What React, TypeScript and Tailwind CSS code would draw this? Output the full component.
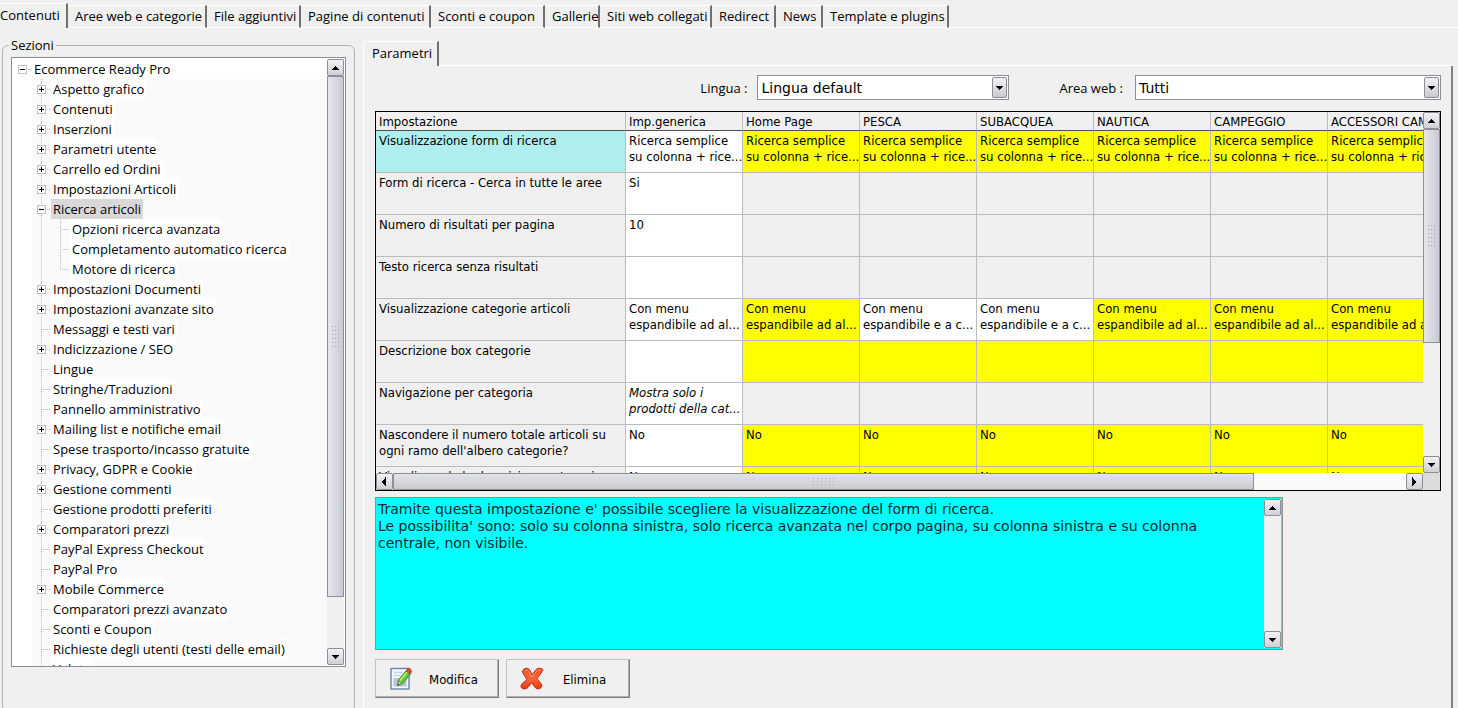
import { useState } from "react";
import clsx from "clsx";

type Guide = "plus" | "minus" | "leaf";

type TreeItem = {
    label: string;
    guide: Guide;
    children?: string[];
};

const TABS = [
    { label: "Contenuti", width: "w-[68px]" },
    { label: "Aree web e categorie", width: "w-[139px]" },
    { label: "File aggiuntivi", width: "w-[94px]" },
    { label: "Pagine di contenuti", width: "w-[130px]" },
    { label: "Sconti e coupon", width: "w-[114px]" },
    { label: "Gallerie", width: "w-[55px]" },
    { label: "Siti web collegati", width: "w-[112px]" },
    { label: "Redirect", width: "w-[64px]" },
    { label: "News", width: "w-[47px]" },
    { label: "Template e plugins", width: "w-[126px]" },
];

const TREE: TreeItem[] = [
    { label: "Aspetto grafico", guide: "plus" },
    { label: "Contenuti", guide: "plus" },
    { label: "Inserzioni", guide: "plus" },
    { label: "Parametri utente", guide: "plus" },
    { label: "Carrello ed Ordini", guide: "plus" },
    { label: "Impostazioni Articoli", guide: "plus" },
    {
        label: "Ricerca articoli",
        guide: "minus",
        children: ["Opzioni ricerca avanzata", "Completamento automatico ricerca", "Motore di ricerca"],
    },
    { label: "Impostazioni Documenti", guide: "plus" },
    { label: "Impostazioni avanzate sito", guide: "plus" },
    { label: "Messaggi e testi vari", guide: "leaf" },
    { label: "Indicizzazione / SEO", guide: "plus" },
    { label: "Lingue", guide: "leaf" },
    { label: "Stringhe/Traduzioni", guide: "leaf" },
    { label: "Pannello amministrativo", guide: "leaf" },
    { label: "Mailing list e notifiche email", guide: "plus" },
    { label: "Spese trasporto/incasso gratuite", guide: "leaf" },
    { label: "Privacy, GDPR e Cookie", guide: "plus" },
    { label: "Gestione commenti", guide: "plus" },
    { label: "Gestione prodotti preferiti", guide: "leaf" },
    { label: "Comparatori prezzi", guide: "plus" },
    { label: "PayPal Express Checkout", guide: "leaf" },
    { label: "PayPal Pro", guide: "leaf" },
    { label: "Mobile Commerce", guide: "plus" },
    { label: "Comparatori prezzi avanzato", guide: "leaf" },
    { label: "Sconti e Coupon", guide: "leaf" },
    { label: "Richieste degli utenti (testi delle email)", guide: "leaf" },
    { label: "Valute", guide: "leaf" },
];

const COLUMNS = ["Imp.generica", "Home Page", "PESCA", "SUBACQUEA", "NAUTICA", "CAMPEGGIO", "ACCESSORI CAMPEGGIO"];

// w = white (own value), y = yellow (inherited), g = grey (not available)
type Cell = { tone: "w" | "y" | "g"; text?: string; italic?: boolean };

const repeat = (cell: Cell, n: number): Cell[] => Array.from({ length: n }, () => cell);
const GREY: Cell = { tone: "g" };

const FORM = "Ricerca semplice\nsu colonna + rice...";
const MENU_AL = "Con menu\nespandibile ad al...";
const MENU_C = "Con menu\nespandibile e a c...";

const ROWS: { name: string; cells: Cell[] }[] = [
    { name: "Visualizzazione form di ricerca", cells: [{ tone: "w", text: FORM }, ...repeat({ tone: "y", text: FORM }, 6)] },
    { name: "Form di ricerca - Cerca in tutte le aree", cells: [{ tone: "w", text: "Si" }, ...repeat(GREY, 6)] },
    { name: "Numero di risultati per pagina", cells: [{ tone: "w", text: "10" }, ...repeat(GREY, 6)] },
    { name: "Testo ricerca senza risultati", cells: [{ tone: "w" }, ...repeat(GREY, 6)] },
    {
        name: "Visualizzazione categorie articoli",
        cells: [
            { tone: "w", text: MENU_AL },
            { tone: "y", text: MENU_AL },
            ...repeat({ tone: "w", text: MENU_C }, 2),
            ...repeat({ tone: "y", text: MENU_AL }, 3),
        ],
    },
    { name: "Descrizione box categorie", cells: [{ tone: "w" }, ...repeat({ tone: "y" }, 6)] },
    {
        name: "Navigazione per categoria",
        cells: [{ tone: "w", text: "Mostra solo i\nprodotti della cat...", italic: true }, ...repeat(GREY, 6)],
    },
    {
        name: "Nascondere il numero totale articoli su\nogni ramo dell'albero categorie?",
        cells: [{ tone: "w", text: "No" }, ...repeat({ tone: "y", text: "No" }, 6)],
    },
    {
        name: "Visualizzando la descrizione categorie",
        cells: [{ tone: "w", text: "No" }, ...repeat({ tone: "y", text: "No" }, 6)],
    },
];

const HELP_TEXT =
    "Tramite questa impostazione e' possibile scegliere la visualizzazione del form di ricerca.\n" +
    "Le possibilita' sono: solo su colonna sinistra, solo ricerca avanzata nel corpo pagina, su colonna sinistra e su colonna centrale, non visibile.";

const ARROWS = {
    up: "M4 0h1v1h1v1h1v1h1v1H1V3h1V2h1V1h1z",
    down: "M1 0h7v1H7v1H6v1H5v1H4V3H3V2H2V1H1z",
    left: "M4 0v9H3V8H2V7H1V6H0V4h1V3h1V2h1V0z",
    right: "M0 0v9h1V8h1V7h1V6h1V4H3V3H2V2H1V0z",
};

const Arrow = ({ dir }: { dir: keyof typeof ARROWS }) => {
    const vertical = dir === "up" || dir === "down";
    return (
        <svg width={vertical ? 9 : 5} height={vertical ? 4 : 9} shapeRendering="crispEdges" aria-hidden="true">
            <path d={ARROWS[dir]} fill="#000" />
        </svg>
    );
};

const ScrollButton = ({ dir, label }: { dir: keyof typeof ARROWS; label: string }) => (
    <button
        type="button"
        aria-label={label}
        className="flex h-[17px] w-[17px] shrink-0 items-center justify-center rounded-xs border border-[#8e8f96] bg-linear-to-b from-[#f2f2f4] to-[#cfd0d6]"
    >
        <Arrow dir={dir} />
    </button>
);

// Dotted grip in the middle of a scrollbar thumb
const Grip = ({ vertical }: { vertical?: boolean }) => {
    const long = [1, 5, 9, 13, 17, 21];
    const short = [1, 4, 7];
    return (
        <svg width={vertical ? 9 : 24} height={vertical ? 24 : 9} shapeRendering="crispEdges" aria-hidden="true">
            {long.map(a =>
                short.map(b => (
                    <rect key={`${a}-${b}`} x={vertical ? b : a} y={vertical ? a : b} width="1" height="1" fill="#a2a4ac" />
                ))
            )}
        </svg>
    );
};

const Expander = ({ guide, root }: { guide: Guide; root?: boolean }) => (
    <svg width="19" height="20" className="shrink-0" shapeRendering="crispEdges" aria-hidden="true">
        {!root && <path d="M9.5 0v20" stroke="#bdbdbd" strokeDasharray="1 1" />}
        <path d="M9 10.5h9" stroke="#bdbdbd" strokeDasharray="1 1" />
        {guide !== "leaf" && (
            <>
                <rect x="5.5" y="6.5" width="8" height="8" fill="#fff" stroke="#c0c0c0" />
                <path d="M7 10.5h5" stroke="#000" />
            </>
        )}
        {guide === "plus" && <path d="M9.5 8v5" stroke="#000" />}
    </svg>
);

const ChildGuide = ({ last }: { last: boolean }) => (
    <svg width="38" height="20" className="shrink-0" shapeRendering="crispEdges" aria-hidden="true">
        <path d={last ? "M9.5 0v20M28.5 0v10" : "M9.5 0v20M28.5 0v20"} stroke="#bdbdbd" strokeDasharray="1 1" fill="none" />
        <path d="M28 10.5h9" stroke="#bdbdbd" strokeDasharray="1 1" />
    </svg>
);

const TreeLabel = ({ label, selected, onSelect }: { label: string; selected: boolean; onSelect: (l: string) => void }) => (
    <button
        type="button"
        onClick={() => onSelect(label)}
        className={clsx("h-5 px-0.5 leading-5 whitespace-nowrap", selected ? "bg-[#d8d8d8]" : "bg-white")}
    >
        {label}
    </button>
);

const SectionTree = () => {
    const [selected, setSelected] = useState("Ricerca articoli");

    return (
        <fieldset className="-mt-1 -mb-1 ml-0.5 w-[353px] shrink-0 self-stretch rounded-md border border-[#b4b4b4] pr-2 pl-1.5">
            <legend className="px-0.5 leading-4">Sezioni</legend>
            <div className="mt-1 ml-0.5 flex h-[610px] border border-[#8e8f96] bg-white">
                <div className="min-w-0 grow overflow-hidden pl-px">
                    <div className="flex h-[21px] items-center">
                        <Expander guide="minus" root />
                        <TreeLabel label="Ecommerce Ready Pro" selected={false} onSelect={setSelected} />
                    </div>
                    <ul className="ml-[19px] bg-[#fafafa]">
                        {TREE.map(item => (
                            <li key={item.label}>
                                <div className="flex">
                                    <Expander guide={item.guide} />
                                    <TreeLabel label={item.label} selected={selected === item.label} onSelect={setSelected} />
                                </div>
                                {item.children && (
                                    <ul>
                                        {item.children.map((child, i) => (
                                            <li key={child} className="flex">
                                                <ChildGuide last={i === item.children!.length - 1} />
                                                <TreeLabel label={child} selected={selected === child} onSelect={setSelected} />
                                            </li>
                                        ))}
                                    </ul>
                                )}
                            </li>
                        ))}
                    </ul>
                </div>
                <div className="my-px mr-px flex w-[17px] flex-col bg-[#f0f0f0]">
                    <ScrollButton dir="up" label="Scorri su" />
                    <div className="flex h-[521px] items-center justify-center border border-[#8e8f96] bg-linear-to-r from-[#e6e7ea] to-[#c6cbd6]">
                        <Grip vertical />
                    </div>
                    <div className="grow" />
                    <ScrollButton dir="down" label="Scorri giù" />
                </div>
            </div>
        </fieldset>
    );
};

const Combo = ({ id, label, options, width, labelGap }: { id: string; label: string; options: string[]; width: string; labelGap: string }) => (
    <div className="flex items-center">
        <label htmlFor={id} className={clsx("pt-0.5 whitespace-nowrap", labelGap)}>{label}</label>
        <div className={clsx("relative", width)}>
            <select
                id={id}
                className="h-[25px] w-full appearance-none rounded-none border border-[#8e8f96] bg-white px-[3px] font-['DejaVu_Sans',sans-serif] text-sm"
            >
                {options.map(o => <option key={o}>{o}</option>)}
            </select>
            <span className="pointer-events-none absolute top-0.5 right-0.5 flex h-[21px] w-[15px] items-center justify-center rounded-xs border border-[#8e8f96] bg-linear-to-b from-[#f2f2f4] to-[#c8cad1]">
                <Arrow dir="down" />
            </span>
        </div>
    </div>
);

const TONES = {
    w: "bg-white",
    y: "bg-[#ffff00]",
    g: "bg-[#efefef]",
};

const SettingsGrid = () => (
    <div className="border border-black font-['DejaVu_Sans_Condensed','DejaVu_Sans',sans-serif] text-[13px] leading-4">
        <div className="flex h-[361px]">
            <div className="min-w-0 grow overflow-hidden">
                <table className="w-[1069px] table-fixed border-separate border-spacing-0">
                    <thead>
                        <tr className="h-[19px] text-left">
                            <th className="w-[250px] border-r border-b border-r-[#bcbcbc] border-b-[#505050] px-[3px] pt-0.5 pb-0 font-normal">Impostazione</th>
                            {COLUMNS.map(c => (
                                <th
                                    key={c}
                                    className="w-[117px] overflow-hidden border-r border-b border-r-[#bcbcbc] border-b-[#505050] px-[3px] pt-0.5 pb-0 font-normal whitespace-nowrap"
                                >
                                    {c}
                                </th>
                            ))}
                        </tr>
                    </thead>
                    <tbody>
                        {ROWS.map((row, r) => (
                            <tr key={row.name} className="h-[42px] align-top whitespace-pre">
                                <th
                                    scope="row"
                                    className={clsx(
                                        "border-r border-b border-[#bcbcbc] px-[3px] py-0.5 text-left font-normal",
                                        r === 0 ? "bg-[#afeeee]" : "bg-[#efefef]"
                                    )}
                                >
                                    {row.name}
                                </th>
                                {row.cells.map((cell, i) => (
                                    <td
                                        key={i}
                                        className={clsx(
                                            "overflow-hidden border-r border-b border-[#bcbcbc] px-[3px] py-0.5",
                                            TONES[cell.tone],
                                            cell.italic && "italic"
                                        )}
                                    >
                                        {cell.text}
                                    </td>
                                ))}
                            </tr>
                        ))}
                    </tbody>
                </table>
            </div>
            <div className="flex w-[17px] shrink-0 flex-col bg-[#f0f0f0]">
                <ScrollButton dir="up" label="Scorri su" />
                <div className="flex h-[214px] items-center justify-center border border-[#8e8f96] bg-linear-to-r from-[#e6e7ea] to-[#c8cbd4]">
                    <Grip vertical />
                </div>
                <div className="grow" />
                <ScrollButton dir="down" label="Scorri giù" />
            </div>
        </div>
        <div className="flex h-[17px]">
            <div className="flex grow bg-[#fafaf8]">
                <ScrollButton dir="left" label="Scorri a sinistra" />
                <div className="flex grow">
                    <div className="flex w-[85%] items-center justify-center border border-[#8e8f96] bg-linear-to-b from-[#e2e3e7] to-[#c9cbd2]">
                        <Grip />
                    </div>
                </div>
                <ScrollButton dir="right" label="Scorri a destra" />
            </div>
            <div className="w-[17px] bg-[#dcdcdc]" />
        </div>
    </div>
);

const EditIcon = () => (
    <svg width="22" height="24" viewBox="0 0 22 24" aria-hidden="true">
        <rect x="1" y="1.500" width="18" height="20.500" fill="#f4f8fc" stroke="#6f84a8" strokeWidth="1.400" />
        <path d="M4 5.500h9M4 8.500h7" stroke="#c4d3e4" strokeWidth="1.500" />
        <path d="M3.500 11h13v8.500h-13z" fill="#b5c6da" />
        <path d="M7.500 18.500l1-5.500L16 4l4.300 3-7.600 9.500z" fill="#5fd02c" stroke="#2f8a17" strokeWidth="1" />
        <path d="M10 13.500L17 5.300" stroke="#b9f391" strokeWidth="1.500" />
        <path d="M7.500 18.500l1-4.500 3.300 2.600z" fill="#f0d29a" stroke="#6d6a38" strokeWidth=".6" />
        <path d="M7.500 18.500l.5-2 1.400 1.100z" fill="#333" />
        <path d="M16 4l1.300-2.200c1.700-1.300 5 .8 4.200 3.200L20.300 7z" fill="#e2483a" stroke="#b0342a" strokeWidth=".6" />
    </svg>
);

const DeleteIcon = () => (
    <svg width="24" height="24" viewBox="0 0 24 24" aria-hidden="true">
        <defs>
            <linearGradient id="del" x1="0" y1="0" x2="0" y2="1">
                <stop offset="0" stopColor="#f8562f" />
                <stop offset=".55" stopColor="#fb6238" />
                <stop offset="1" stopColor="#e8350f" />
            </linearGradient>
        </defs>
        <path
            d="M4.500 1.800c2.200-1 4.300-.5 5.300 1.500l2.400 4.400 3.300-4.500c1.500-2.300 5-2.500 6.900-1.200.9.900.2 2-.7 3.200L17 11.500l4.300 5.500c1 1.500.5 3.700-1.500 4.500-2.200.9-4 .2-5-1.500l-3-4.500-3.300 4.300c-1.500 2.200-4.600 2.800-6.700 1.300-1.500-1.200-.8-3.200.5-4.600L7 12.500 3.200 6.500C2 4.700 2.500 2.700 4.500 1.800z"
            fill="url(#del)"
            stroke="#c22c0c"
            strokeWidth="1"
        />
        <path d="M5 3.500c1.500-.8 2.800-.3 3.500 1l3.500 5.700 4.700-6.200c1-1.300 2.700-1.500 4-1" fill="none" stroke="#ff9a78" strokeWidth="1" />
    </svg>
);

const ActionButton = ({ icon, label }: { icon: React.ReactNode; label: string }) => (
    <button
        type="button"
        className="grid h-[39px] w-[124px] grid-cols-[50px_1fr] items-center border border-t-[#c4c4c4] border-r-[#7c7c7c] border-b-[#7c7c7c] border-l-[#c4c4c4] bg-[#f0f0f0] font-['DejaVu_Sans_Condensed','DejaVu_Sans',sans-serif] text-[13px] shadow-[inset_-1px_-1px_0_#b0b0b0]"
    >
        <span className="flex justify-center">{icon}</span>
        <span className="pt-0.5 pr-[17px] text-center">{label}</span>
    </button>
);

const ParametersPanel = () => (
    <section className="ml-2 flex min-w-0 grow flex-col">
        <div className="flex h-[25px] shrink-0" role="tablist">
            <button
                type="button"
                role="tab"
                aria-selected="true"
                className="w-[76px] border-t border-r-2 border-l border-t-white border-r-[#707070] border-l-white pl-2 text-left"
            >
                Parametri
            </button>
            <div className="mr-[5px] grow border-b border-white" />
        </div>
        <div className="mr-[5px] grow border-r-2 border-l border-r-[#808080] border-l-white pr-[10px] pl-[11px]">
            <div className="flex justify-end gap-[50px] pt-[9px] pb-[11px]">
                <Combo id="lingua" label="Lingua :" options={["Lingua default", "Italiano", "English"]} width="w-[252px]" labelGap="pr-2.5" />
                <Combo id="area" label="Area web :" options={["Tutti", ...COLUMNS.slice(1)]} width="w-[306px]" labelGap="pr-3" />
            </div>
            <SettingsGrid />
            <div className="mt-1.5 mr-[158px] flex h-[153px] border border-[#8e8f96] bg-[#00ffff]">
                <textarea
                    readOnly
                    aria-label="Descrizione impostazione"
                    value={HELP_TEXT}
                    className="block min-w-0 grow resize-none overflow-hidden px-0.5 pt-[3px] font-['DejaVu_Sans',sans-serif] text-sm leading-[17px] text-[#00282c] outline-none"
                />
                <div className="my-px mr-px flex w-[17px] flex-col justify-between bg-[#f0f0f0]">
                    <ScrollButton dir="up" label="Scorri su" />
                    <ScrollButton dir="down" label="Scorri giù" />
                </div>
            </div>
            <div className="flex gap-[7px] pt-[9px]">
                <ActionButton icon={<EditIcon />} label="Modifica" />
                <ActionButton icon={<DeleteIcon />} label="Elimina" />
            </div>
        </div>
    </section>
);

export default function App() {
    return (
        <div className="flex h-screen flex-col overflow-hidden bg-[#f0f0f0] font-['Open_Sans','Noto_Sans',sans-serif] text-[13px] text-black">
            <nav className="flex h-7 shrink-0" role="tablist">
                {TABS.map((tab, i) => (
                    <button
                        key={tab.label}
                        type="button"
                        role="tab"
                        aria-selected={i === 0}
                        className={clsx(
                            "shrink-0 border-t border-r-2 border-t-white border-r-[#707070] text-left whitespace-nowrap",
                            tab.width,
                            i === 0 ? "mt-[3px]" : "mt-[5px] border-b border-b-white pl-[7px]"
                        )}
                    >
                        {tab.label}
                    </button>
                ))}
                <div className="grow border-b border-white" />
            </nav>
            <div className="flex grow pt-[13px]">
                <SectionTree />
                <ParametersPanel />
            </div>
        </div>
    );
}
